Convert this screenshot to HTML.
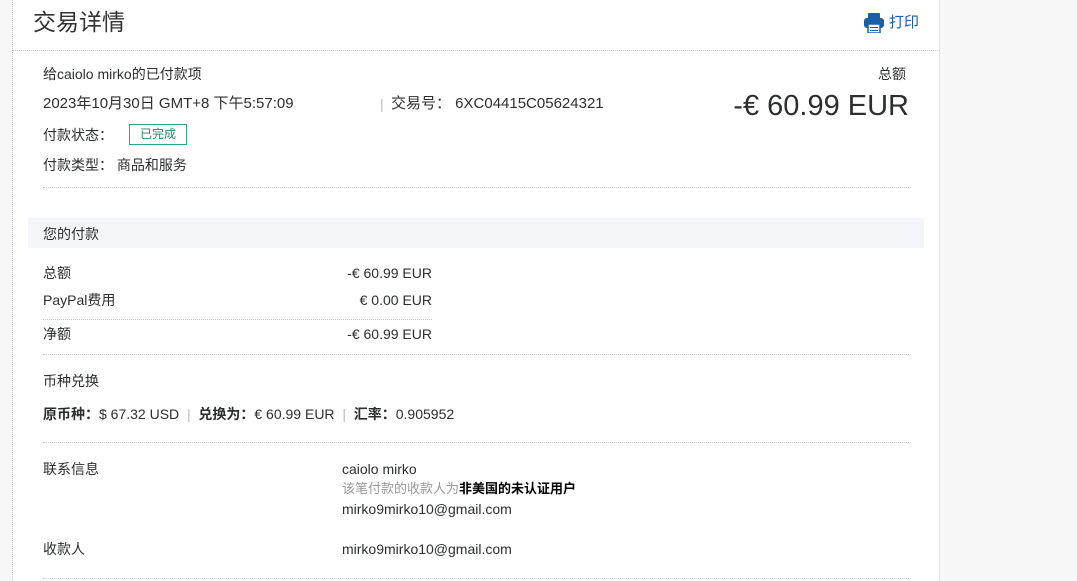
<!DOCTYPE html>
<html><head><meta charset="utf-8"><style>
*{margin:0;padding:0;box-sizing:border-box}
body{width:1077px;height:581px;overflow:hidden;background:#f7f7f7;font-family:"Liberation Sans","Noto Sans CJK SC",sans-serif;color:#2c2e2f;font-size:14px;position:relative}
.card{position:absolute;left:12px;top:0;width:928px;height:581px;background:#fff;border-left:1px dotted #ccc;border-right:1px solid #e5e5e5}
.a{position:absolute;white-space:nowrap;line-height:18px}
.hr{position:absolute;border-top:1px dotted #c8c8c8;height:0}
.r{text-align:right}
b{font-weight:bold}
</style></head><body>
<div class="card"></div>
<div class="a" style="left:33px;top:8px;font-size:23px;line-height:28px;color:#333">交易详情</div>
<svg style="position:absolute;left:864px;top:13px" width="20" height="20" viewBox="0 0 20 20"><rect x="4" y="0" width="12" height="6" rx="1" fill="#1a5fa8"/><rect x="0" y="5" width="20" height="10" rx="3" fill="#1a5fa8"/><rect x="4" y="11" width="12" height="9" fill="#fff" stroke="#1a5fa8" stroke-width="1.5"/><rect x="6" y="14" width="8" height="1" fill="#1a5fa8"/><rect x="6" y="17" width="8" height="1" fill="#1a5fa8"/></svg>
<div class="a" style="left:889px;top:14px;color:#1a5fa8;font-size:15px">打印</div>
<div class="hr" style="left:12px;top:50px;width:928px"></div>

<div class="a" style="left:43px;top:65px">给caiolo mirko的已付款项</div>
<div class="a" style="left:878px;top:65px">总额</div>
<div class="a" style="left:43px;top:95px;font-size:15px">2023年10月30日 GMT+8 下午5:57:09</div>
<div class="a" style="left:380px;top:95px;color:#bbb">|</div>
<div class="a" style="left:391px;top:95px;font-size:15px">交易号： 6XC04415C05624321</div>
<div class="a" style="left:700px;top:89px;width:209px;font-size:29px;line-height:34px;text-align:right">-€ 60.99 EUR</div>
<div class="a" style="left:43px;top:126px">付款状态：</div>
<div class="a" style="left:129px;top:124px;width:58px;height:21px;border:1px solid #2ba683;color:#1e8a63;font-size:12px;text-align:center;line-height:19px">已完成</div>
<div class="a" style="left:43px;top:156px">付款类型： 商品和服务</div>
<div class="hr" style="left:43px;top:187px;width:866px"></div>

<div style="position:absolute;left:28px;top:218px;width:896px;height:30px;background:#f4f5f8"></div>
<div class="a" style="left:43px;top:225px">您的付款</div>
<div class="a" style="left:43px;top:264px">总额</div>
<div class="a r" style="left:300px;width:132px;top:264px">-€ 60.99 EUR</div>
<div class="a" style="left:43px;top:291px">PayPal费用</div>
<div class="a r" style="left:300px;width:132px;top:291px">€ 0.00 EUR</div>
<div class="hr" style="left:43px;top:319px;width:389px"></div>
<div class="a" style="left:43px;top:325px">净额</div>
<div class="a r" style="left:300px;width:132px;top:325px">-€ 60.99 EUR</div>
<div class="hr" style="left:43px;top:354px;width:866px"></div>
<div class="a" style="left:43px;top:372px">币种兑换</div>
<div class="a" style="left:43px;top:405px"><b>原币种：</b>$ 67.32 USD <span style="color:#bbb">&nbsp;|&nbsp;</span> <b>兑换为：</b>€ 60.99 EUR <span style="color:#bbb">&nbsp;|&nbsp;</span> <b>汇率：</b>0.905952</div>
<div class="hr" style="left:43px;top:442px;width:866px"></div>
<div class="a" style="left:43px;top:460px">联系信息</div>
<div class="a" style="left:342px;top:460px">caiolo mirko</div>
<div class="a" style="left:342px;top:480px;font-size:13px;color:#999">该笔付款的收款人为<b style="color:#000">非美国的未认证用户</b></div>
<div class="a" style="left:342px;top:500px">mirko9mirko10@gmail.com</div>
<div class="a" style="left:43px;top:540px">收款人</div>
<div class="a" style="left:342px;top:540px">mirko9mirko10@gmail.com</div>
<div class="hr" style="left:43px;top:578px;width:866px"></div>
</body></html>
